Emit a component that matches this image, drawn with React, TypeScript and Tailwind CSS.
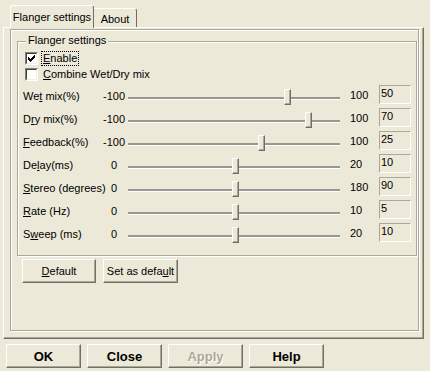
import React from "react";

const U = ({ c }: { c: string }) => <span className="underline underline-offset-[1px]">{c}</span>;

type Row = { pre: string; u: string; post: string; min: string; max: string; val: string; f: number };

const rows: Row[] = [
  { pre: "We", u: "t", post: " mix(%)", min: "-100", max: "100", val: "50", f: 0.75 },
  { pre: "D", u: "r", post: "y mix(%)", min: "-100", max: "100", val: "70", f: 0.85 },
  { pre: "", u: "F", post: "eedback(%)", min: "-100", max: "100", val: "25", f: 0.625 },
  { pre: "De", u: "l", post: "ay(ms)", min: "0", max: "20", val: "10", f: 0.5 },
  { pre: "", u: "S", post: "tereo (degrees)", min: "0", max: "180", val: "90", f: 0.5 },
  { pre: "", u: "R", post: "ate (Hz)", min: "0", max: "10", val: "5", f: 0.5 },
  { pre: "S", u: "w", post: "eep (ms)", min: "0", max: "20", val: "10", f: 0.5 },
];

function CheckBox({ checked }: { checked?: boolean }) {
  return (
    <div className="ml-[2px] h-[13px] w-[13px] shrink-0 border border-t-[#808080] border-l-[#808080] border-r-white border-b-white">
      <div className="flex h-full w-full items-center justify-center border border-t-[#404040] border-l-[#404040] border-r-[#F1EFE2] border-b-[#F1EFE2] bg-white">
        {checked && (
          <svg width="7" height="7" viewBox="0 0 7 7" shapeRendering="crispEdges">
            <path
              d="M6 0h1v1h-1z M5 1h2v1h-2z M0 2h1v1h-1z M4 2h3v1h-3z M0 3h2v1h-2z M3 3h3v1h-3z M0 4h5v1h-5z M1 5h3v1h-3z M2 6h1v1h-1z"
              fill="#000"
            />
          </svg>
        )}
      </div>
    </div>
  );
}

function Btn({ className, children }: { className: string; children: React.ReactNode }) {
  return (
    <div
      className={
        "flex h-[24px] items-center justify-center border border-l-white border-t-white border-r-[#716F64] border-b-[#716F64] bg-[#ECE9D8] shadow-[inset_-1px_-1px_0_#ACA899] " +
        className
      }
    >
      {children}
    </div>
  );
}

export default function App() {
  return (
    <div className="h-[371px] w-[430px] overflow-hidden bg-[#ECE9D8] font-['Liberation_Sans',Arial,sans-serif] text-[11px] leading-[13px] text-black select-none">
      {/* tab strip */}
      <div className="relative z-10 flex h-[28px] items-end pl-[10px]">
        <div className="flex h-[23px] w-[84px] items-center justify-center rounded-t-[3px] border-l border-r border-t border-l-white border-t-white border-r-[#716F64] bg-[#ECE9D8]">
          Flanger settings
        </div>
        <div className="mb-[1px] flex h-[19px] w-[43px] items-center justify-center rounded-tr-[3px] border-r border-t border-t-white border-r-[#716F64] bg-[#ECE9D8] pt-[3px]">
          About
        </div>
      </div>

      {/* tab panel */}
      <div className="-mt-[1px] ml-[3px] h-[312px] w-[421px] border border-l-white border-t-white border-r-[#716F64] border-b-[#716F64] shadow-[inset_-1px_-1px_0_#ACA899]">
        <div className="ml-[6px] mt-[1px] h-[302px] w-[409px] border border-[#ACA899] shadow-[inset_1px_1px_0_#fff,1px_1px_0_#fff]">
          {/* group box */}
          <div className="relative ml-[6px] mt-[11px] h-[215px] w-[400px] border border-[#ACA899] pl-[5px] shadow-[inset_1px_1px_0_#fff,1px_1px_0_#fff]">
            <div className="absolute left-[8px] top-[-8px] bg-[#ECE9D8] px-[2px]">Flanger settings</div>

            <div className="mt-[10px] flex h-[13px] items-center">
              <CheckBox checked />
              <span className="ml-[3px] border border-dotted border-black px-[1px]">
                <U c="E" />
                nable
              </span>
            </div>
            <div className="mt-[3px] flex h-[13px] items-center">
              <CheckBox />
              <span className="ml-[5px]">
                <U c="C" />
                ombine Wet/Dry mix
              </span>
            </div>

            <div className="mt-[4px] flex flex-col">
              {rows.map((r) => (
                <div key={r.u + r.post} className="flex h-[23px] items-start">
                  <div className="mt-[5px] w-[73px] whitespace-nowrap">
                    {r.pre}
                    <U c={r.u} />
                    {r.post}
                  </div>
                  <div className="mt-[5px] w-[32px] pl-[4px] text-center">{r.min}</div>
                  <div className="relative h-[23px] w-[212px]">
                    <div className="absolute left-0 top-[12px] h-[3px] w-[212px] border-t-2 border-t-[#9A988C] bg-white" />
                    <div
                      className="absolute top-[4px] h-[16px] w-[7px] border border-l-white border-t-white border-r-[#716F64] border-b-[#716F64] bg-[#ECE9D8] shadow-[inset_-1px_-1px_0_#ACA899]"
                      style={{ left: Math.round(208 * r.f) }}
                    />
                  </div>
                  <div className="ml-[10px] mt-[4px] w-[29px]">{r.max}</div>
                  <div className="h-[19px] w-[32px] border border-t-[#ACA899] border-l-[#ACA899] border-r-white border-b-white pl-[1px] pt-[1px]">
                    {r.val}
                  </div>
                </div>
              ))}
            </div>
          </div>

          <div className="ml-[11px] mt-[3px] flex gap-[7px]">
            <Btn className="w-[74px]">
              <U c="D" />
              efault
            </Btn>
            <Btn className="w-[75px]">
              Set as defa
              <U c="u" />
              lt
            </Btn>
          </div>
        </div>
      </div>

      {/* bottom buttons */}
      <div className="mt-[5px] flex gap-[6px] pl-[6px] text-[13px] font-bold">
        <Btn className="w-[75px]">OK</Btn>
        <Btn className="w-[75px]">Close</Btn>
        <Btn className="w-[75px] text-[#ACA899] [text-shadow:1px_1px_0_#fff]">Apply</Btn>
        <Btn className="w-[75px]">Help</Btn>
      </div>
    </div>
  );
}
